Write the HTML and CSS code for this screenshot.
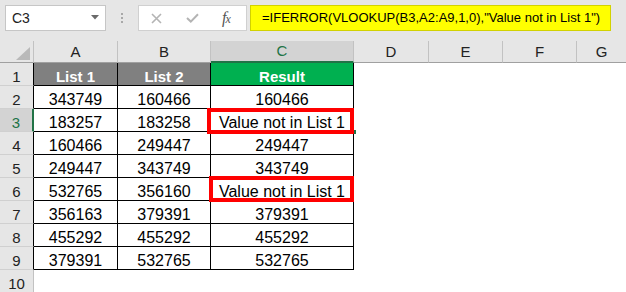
FILE: index.html
```html
<!DOCTYPE html>
<html>
<head>
<meta charset="utf-8">
<link rel="stylesheet" href="styles.css">
</head>
<body>
<div class="app">
  <div class="toolbar">
    <div class="namebox">
      <span class="name">C3</span>
      <svg class="caret" width="8" height="5" viewBox="0 0 8 5"><path d="M0 0H8L4 4.5Z" fill="#6a6a6a"/></svg>
    </div>
    <div class="grip"><i></i><i></i><i></i></div>
    <div class="fxbox">
      <svg class="ico-x" width="11" height="11" viewBox="0 0 11 11"><path d="M1 1L10 10M10 1L1 10" stroke="#b4b4b4" stroke-width="1.6" fill="none"/></svg>
      <svg class="ico-check" width="13" height="10" viewBox="0 0 13 10"><path d="M1 5L4.8 8.6L12 1.2" stroke="#b4b4b4" stroke-width="2" fill="none"/></svg>
      <span class="fx">f<small>x</small></span>
    </div>
    <div class="formula">=IFERROR(VLOOKUP(B3,A2:A9,1,0),"Value not in List 1")</div>
  </div>

  <div class="sheet">
    <div class="ch corner"><svg width="33" height="21" viewBox="0 0 33 21"><path d="M30 6V19H16Z" fill="#b9b9b9"/></svg></div>
    <div class="ch">A</div>
    <div class="ch">B</div>
    <div class="ch sel">C</div>
    <div class="ch">D</div>
    <div class="ch">E</div>
    <div class="ch">F</div>
    <div class="ch last">G</div>

    <div class="rh">1</div>
    <div class="c hd-gray">List 1</div>
    <div class="c hd-gray">List 2</div>
    <div class="c hd-green">Result</div>
    <div class="e"></div><div class="e"></div><div class="e"></div><div class="e"></div>

    <div class="rh">2</div>
    <div class="c">343749</div>
    <div class="c">160466</div>
    <div class="c">160466</div>
    <div class="e"></div><div class="e"></div><div class="e"></div><div class="e"></div>

    <div class="rh sel">3</div>
    <div class="c">183257</div>
    <div class="c">183258</div>
    <div class="c mark">Value not in List 1<span class="handle"></span><span class="redbox r3"></span></div>
    <div class="e"></div><div class="e"></div><div class="e"></div><div class="e"></div>

    <div class="rh">4</div>
    <div class="c">160466</div>
    <div class="c">249447</div>
    <div class="c">249447</div>
    <div class="e"></div><div class="e"></div><div class="e"></div><div class="e"></div>

    <div class="rh">5</div>
    <div class="c">249447</div>
    <div class="c">343749</div>
    <div class="c">343749</div>
    <div class="e"></div><div class="e"></div><div class="e"></div><div class="e"></div>

    <div class="rh">6</div>
    <div class="c">532765</div>
    <div class="c">356160</div>
    <div class="c mark">Value not in List 1<span class="redbox r6"></span></div>
    <div class="e"></div><div class="e"></div><div class="e"></div><div class="e"></div>

    <div class="rh">7</div>
    <div class="c">356163</div>
    <div class="c">379391</div>
    <div class="c">379391</div>
    <div class="e"></div><div class="e"></div><div class="e"></div><div class="e"></div>

    <div class="rh">8</div>
    <div class="c">455292</div>
    <div class="c">455292</div>
    <div class="c">455292</div>
    <div class="e"></div><div class="e"></div><div class="e"></div><div class="e"></div>

    <div class="rh">9</div>
    <div class="c">379391</div>
    <div class="c">532765</div>
    <div class="c">532765</div>
    <div class="e"></div><div class="e"></div><div class="e"></div><div class="e"></div>

    <div class="rh plain">10</div>
    <div class="e"></div><div class="e"></div><div class="e"></div><div class="e"></div>
    <div class="e"></div><div class="e"></div><div class="e"></div>
  </div>
</div>
</body>
</html>
```

FILE: styles.css
```css
* { box-sizing: border-box; }
html, body { margin: 0; padding: 0; }
body {
  width: 626px;
  height: 292px;
  overflow: hidden;
  background: #ffffff;
  font-family: "Liberation Sans", Arial, sans-serif;
  color: #000;
}
.app { width: 626px; }

.toolbar {
  height: 41px;
  background: #e6e6e6;
  display: flex;
  align-items: flex-start;
  padding: 5px 0 0 5px;
}
.namebox {
  width: 101px;
  height: 26px;
  background: #fff;
  border: 1px solid #c6c6c6;
  display: flex;
  align-items: center;
  padding-left: 6px;
  padding-right: 6px;
}
.name { font-size: 14px; color: #222; }
.caret { margin-left: auto; margin-top: -2px; }
.grip {
  width: 32px;
  height: 26px;
  display: flex;
  flex-direction: column;
  align-items: center;
  justify-content: center;
  gap: 2px;
}
.grip i {
  display: block;
  width: 2px;
  height: 2px;
  background: #a8a8a8;
}
.fxbox {
  width: 109px;
  height: 26px;
  background: #fff;
  border: 1px solid #d0d0d0;
  display: flex;
  align-items: center;
  padding-left: 12px;
}
.ico-check { margin-left: 24px; }
.fx {
  margin-left: 23px;
  font-family: "Liberation Serif", "Times New Roman", serif;
  font-style: italic;
  font-size: 16px;
  color: #555;
  letter-spacing: -1px;
}
.fx small { font-size: 12px; }
.formula {
  margin-left: 3px;
  width: 361px;
  height: 26px;
  background: #ffff00;
  border: 1px solid #d2d200;
  padding-left: 11px;
  font-size: 13px;
  line-height: 24px;
  white-space: nowrap;
}

.sheet {
  display: grid;
  grid-template-columns: 34px 84px 93px 143px 75px 74px 74px 1fr;
  grid-template-rows: 22px repeat(10, 23px);
}
.ch {
  background: #e6e6e6;
  border-right: 1px solid #c2c2c2;
  border-bottom: 1px solid #a0a0a0;
  text-align: center;
  font-size: 15px;
  line-height: 21px;
  color: #222;
}
.ch.last { border-right: 0; }
.ch.corner { line-height: 0; }
.ch.corner svg { display: block; }
.ch.sel {
  background: #d3d3d3;
  color: #217346;
  border-bottom: 2px solid #217346;
  line-height: 20px;
}
.rh {
  background: #e6e6e6;
  border-right: 1px solid #000;
  border-bottom: 1px solid #d0d0d0;
  text-align: center;
  font-size: 15px;
  line-height: 21px;
  padding-top: 3px;
  color: #222;
}
.rh.sel {
  background: #d3d3d3;
  color: #217346;
  border-right: 2px solid #217346;
}
.rh.plain { border-right: 1px solid #c2c2c2; }
.c {
  border-right: 1px solid #000;
  border-bottom: 1px solid #000;
  text-align: center;
  font-size: 16px;
  line-height: 21px;
  padding-top: 3px;
  white-space: nowrap;
}
.hd-gray {
  background: #808080;
  color: #fff;
  font-weight: bold;
  font-size: 15px;
}
.hd-green {
  background: #00b050;
  color: #fff;
  font-weight: bold;
  font-size: 15px;
}
.e { background: #fff; }
.mark { position: relative; }
.redbox {
  position: absolute;
  border: 4px solid #ff0000;
}
.redbox.r3 { left: -4px; right: -1px; top: -1px; bottom: -3px; }
.redbox.r6 { left: -2px; right: -1px; top: -2px; bottom: -2px; }
.handle {
  position: absolute;
  right: -3px;
  top: 21px;
  width: 2px;
  height: 4px;
  background: #217346;
}
```
